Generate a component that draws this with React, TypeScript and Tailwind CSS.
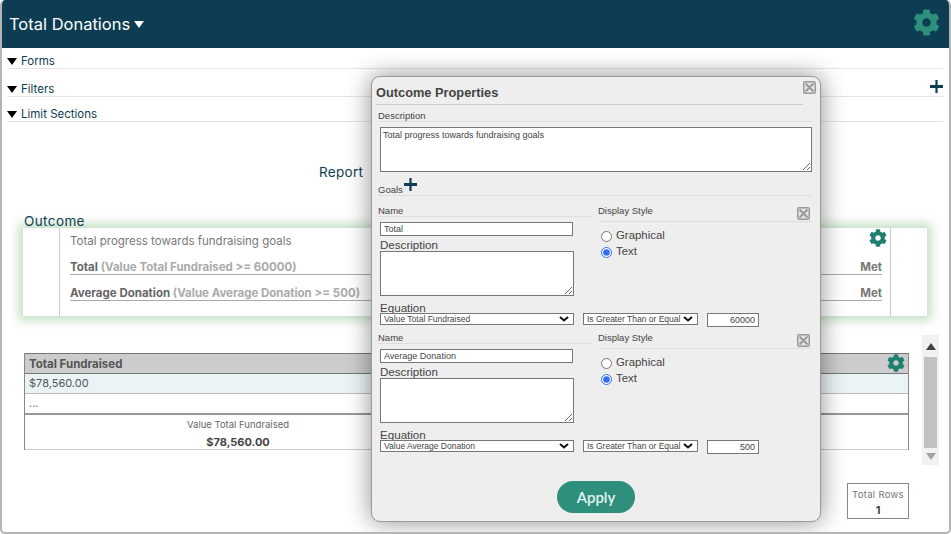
import React from "react";
import { FaCog } from "react-icons/fa";

const Caret = ({ className = "" }: { className?: string }) => (
  <svg viewBox="0 0 10 7" className={`w-[10px] h-[7px] ${className}`}>
    <path d="M0 0h10L5 7z" fill="currentColor" />
  </svg>
);

const PlusIcon = ({ className = "" }: { className?: string }) => (
  <svg viewBox="0 0 14 14" className={`w-[13px] h-[13px] text-[#0d3d52] ${className}`}>
    <path d="M0 5.5h14v3H0zM5.8 0h2.4v14H5.8z" fill="currentColor" />
  </svg>
);

const CloseIcon = ({ className = "" }: { className?: string }) => (
  <svg viewBox="0 0 13 13" className={`w-[13px] h-[13px] ${className}`}>
    <rect x="0" y="0" width="13" height="13" rx="2" fill="#9a9a9a" />
    <rect x="1.5" y="1.5" width="10" height="10" fill="#e4e4e4" />
    <path d="M2.5 2.5l8 8M10.5 2.5l-8 8" stroke="#9a9a9a" strokeWidth="2" />
  </svg>
);

const Chevron = () => (
  <svg
    viewBox="0 0 10 6"
    className="absolute right-[5px] top-[3px] w-[10px] h-[6px] pointer-events-none"
  >
    <path d="M1 1l4 3.4L9 1" fill="none" stroke="#111" strokeWidth="2" />
  </svg>
);

const SectionRow = ({ label, height, plus }: { label: string; height: string; plus?: boolean }) => (
  <div className={`flex items-end justify-between border-b border-[#e4e4e4] ${height}`}>
    <div className="flex items-center gap-[4px] text-[11.5px] leading-[13px] text-[#0d3d52]">
      <Caret className="text-black" />
      <span>{label}</span>
    </div>
    {plus && <PlusIcon className="mb-[3px]" />}
  </div>
);

const GoalRow = ({ name, value }: { name: string; value: string }) => (
  <div className="flex items-end justify-between h-[26px] border-b border-[#aaa] ml-[10px] mr-[8px] text-[11.5px] font-bold leading-[14px]">
    <div>
      <span className="text-[#666]">{name} </span>
      <span className="text-[#aaa]">{value}</span>
    </div>
    <span className="text-[#777]">Met</span>
  </div>
);

const GoalEditor = ({
  name,
  field,
  amount,
}: {
  name: string;
  field: string;
  amount: string;
}) => (
  <div className="h-[127px] flex flex-col">
    <div className="flex h-[92px]">
      <div className="w-[214px] shrink-0">
        <div className="h-[13px] border-b border-[#ddd] text-[9.5px] leading-[13px] text-[#444]">Name</div>
        <input
          defaultValue={name}
          className="block mt-[5px] ml-[2px] w-[193px] h-[14px] border border-[#777] bg-white px-[3px] text-[9px] text-[#444]"
        />
        <div className="ml-[2px] mt-[3px] text-[11.6px] leading-[12px] text-[#444]">Description</div>
        <textarea className="block ml-[2px] w-[194px] h-[45px] border border-[#777] bg-white" />
      </div>
      <div className="ml-[6px] flex-1 relative">
        <div className="h-[18px] border-b border-[#ddd] text-[9.5px] leading-[13px] text-[#444]">Display Style</div>
        <CloseIcon className="absolute right-[2px] top-[3px]" />
        <label className="flex items-center gap-[4px] ml-[3px] mt-[6px] h-[16px] text-[11.4px] text-[#444]">
          <input type="radio" name={name} className="w-[11px] h-[11px] m-0" />
          Graphical
        </label>
        <label className="flex items-center gap-[4px] ml-[3px] h-[16px] text-[11.4px] text-[#444]">
          <input type="radio" name={name} defaultChecked className="w-[11px] h-[11px] m-0 accent-[#2f6fed]" />
          Text
        </label>
      </div>
    </div>
    <div className="ml-[2px] text-[11.6px] leading-[12px] mt-[6px] mb-[-1px] text-[#444]">Equation</div>
    <div className="flex items-start ml-[2px]">
      <div className="relative w-[194px] h-[12px]">
        <select className="block appearance-none w-full h-full border border-[#777] bg-white text-[8.5px] leading-[10px] pl-[3px] text-[#444]">
          <option>{field}</option>
        </select>
        <Chevron />
      </div>
      <div className="relative ml-[9px] w-[115px] h-[12px]">
        <select className="block appearance-none w-full h-full border border-[#777] bg-white text-[8.5px] leading-[10px] pl-[3px] text-[#444]">
          <option>Is Greater Than or Equal</option>
        </select>
        <Chevron />
      </div>
      <input
        defaultValue={amount}
        className="ml-[9px] w-[52px] h-[14px] border border-[#777] bg-white px-[3px] text-right text-[9px] text-[#444]"
      />
    </div>
  </div>
);

const OutcomeProperties = () => (
  <div
    className="absolute left-[369px] top-[76px] w-[450px] h-[446px] rounded-[9px] border border-[#9a9a9a] bg-[#eeeeee] shadow-[0_0_24px_rgba(0,0,0,0.45)] pl-[6px] pr-[8px] font-['Liberation_Sans',Arial,sans-serif]"
  >
    <CloseIcon className="absolute right-[4px] top-[4px]" />
    <div className="mr-[9px] ml-[-2px] h-[28px] border-b border-[#ccc] pt-[8px] text-[12.8px] leading-[16px] font-bold text-[#444]">
      Outcome Properties
    </div>
    <div className="h-[17px] border-b border-[#ddd] pt-[5px] text-[9.5px] leading-[11px] text-[#444]">Description</div>
    <textarea
      defaultValue="Total progress towards fundraising goals"
      className="block mt-[5px] ml-[2px] w-[432px] h-[45px] border border-[#777] bg-white px-[2px] py-[2px] text-[9px] leading-[11px] text-[#444]"
    />
    <div className="relative h-[24px] border-b border-[#ddd] text-[9.5px] text-[#444]">
      <span className="absolute left-0 top-[12px] leading-[11px]">Goals</span>
      <PlusIcon className="absolute left-[26px] top-[6px]" />
    </div>
    <div className="mt-[8px]">
      <GoalEditor name="Total" field="Value Total Fundraised" amount="60000" />
      <GoalEditor name="Average Donation" field="Value Average Donation" amount="500" />
    </div>
    <div className="flex justify-center mt-[23px]">
      <button className="ml-[2px] w-[78px] h-[32px] rounded-full bg-[#2e8f7d] text-[15px] font-semibold text-[#e6f4f1] font-['Lato',sans-serif]">
        Apply
      </button>
    </div>
  </div>
);

export default function App() {
  return (
    <div className="relative w-[951px] h-[534px] overflow-hidden rounded-[5px] border-x-2 border-b-2 border-[#b5b5b5] bg-white font-['Inter',sans-serif]">
      <header className="flex items-center justify-between h-[48px] ml-[-1px] bg-[#0d3d52] pl-[8px] pr-[9px]">
        <div className="flex items-center gap-[4px] text-white text-[16.5px]">
          <span>Total Donations</span>
          <Caret />
        </div>
        <FaCog className="mb-[3px] w-[27px] h-[27px] text-[#2e8f7d]" />
      </header>

      <div className="px-[5px] mr-[1px]">
        <SectionRow label="Forms" height="h-[21px]" />
        <SectionRow label="Filters" height="h-[28px]" plus />
        <SectionRow label="Limit Sections" height="h-[25px]" />
      </div>

      <div className="mt-[41px] pl-[317px] h-[18px] text-[13.5px] leading-[18px] tracking-[0.3px] text-[#0d3d52]">
        Report
      </div>

      <div className="mt-[34px] ml-[22px] text-[13.5px] leading-[13px] tracking-[0.4px] text-[#0d3d52]">Outcome</div>

      <div className="ml-[21px] w-[904px] h-[88px] bg-white px-[36px] shadow-[0_0_10px_4px_rgba(130,190,130,0.5)]">
        <div className="relative h-full border-x border-[#ccc]">
          <div className="pl-[10px] pt-[5px] text-[11.5px] leading-[16px] text-[#777]">
            Total progress towards fundraising goals
          </div>
          <FaCog className="absolute right-[3px] top-[1px] w-[18px] h-[18px] text-[#1f7f6f]" />
          <GoalRow name="Total" value="(Value Total Fundraised >= 60000)" />
          <GoalRow name="Average Donation" value="(Value Average Donation >= 500)" />
        </div>
      </div>

      <div className="flex items-start mt-[19px] ml-[22px]">
        <div className="w-[885px] pt-[18px]">
          <div className="border-x border-[#888]">
            <div className="relative h-[21px] border-y border-[#777] bg-[#cccccc] pl-[4px] text-[11.5px] font-bold leading-[21px] text-[#555]">
              Total Fundraised
              <FaCog className="absolute right-[3px] top-[0px] w-[18px] h-[18px] text-[#1f7f6f]" />
            </div>
            <div className="h-[20px] border-b border-[#bbb] bg-[#eaf4f6] pl-[4px] text-[11px] leading-[19px] text-[#555]">
              $78,560.00
            </div>
            <div className="h-[21px] border-b-2 border-[#999] pl-[4px] text-[11px] leading-[18px] text-[#777]">...</div>
            <div className="h-[35px] border-b border-[#ccc]">
              <div className="w-[426px] text-center">
                <div className="pt-[3px] text-[9.5px] leading-[13px] text-[#666]">Value Total Fundraised</div>
                <div className="pt-[4px] text-[11px] font-bold leading-[14px] text-[#444]">$78,560.00</div>
              </div>
            </div>
          </div>
        </div>
        <div className="ml-[13px] flex h-[130px] w-[17px] flex-col items-center bg-[#f1f1f1]">
          <div className="flex h-[22px] items-center">
            <Caret className="w-[8px] h-[5px] rotate-180 text-[#444]" />
          </div>
          <div className="h-[91px] w-[13px] bg-[#c1c1c1]" />
          <div className="flex h-[17px] items-center">
            <Caret className="w-[8px] h-[5px] text-[#a3a3a3]" />
          </div>
        </div>
      </div>

      <div className="mt-[18px] ml-[845px] h-[36px] w-[62px] border border-[#888] text-center">
        <div className="pt-[4px] text-[9.5px] leading-[13px] tracking-[0.3px] text-[#777]">Total Rows</div>
        <div className="pt-[3px] text-[11px] font-bold leading-[13px] text-[#444]">1</div>
      </div>

      <OutcomeProperties />
    </div>
  );
}
